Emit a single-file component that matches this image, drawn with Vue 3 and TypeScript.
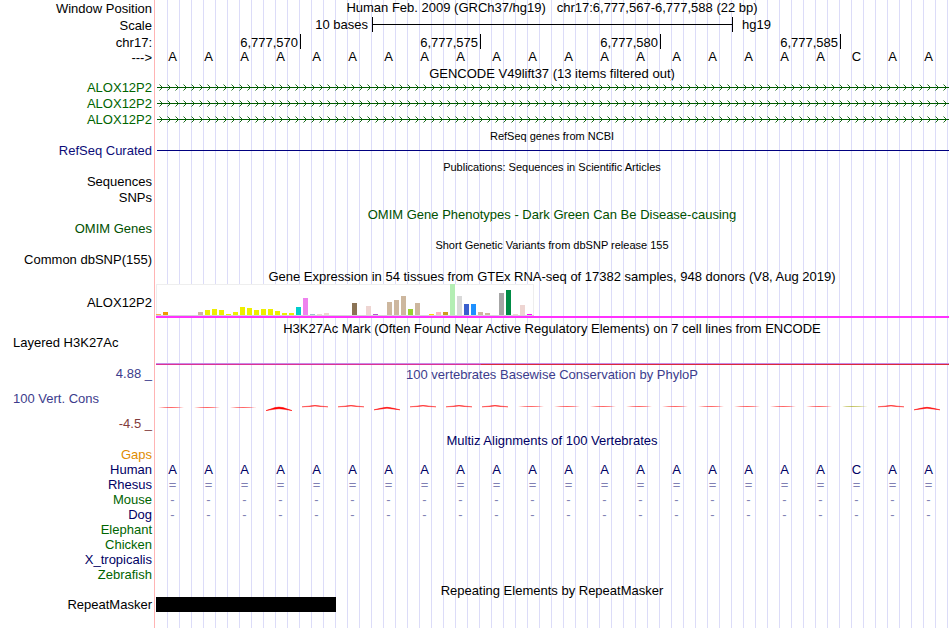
<script setup lang="ts">
type Tone = 'navy' | 'gene'

interface Bar {
  h: number
  c: string
}

interface Species {
  name: string
  tone: Tone
  symbol?: string
}

const bases: string[] = 'AAAAAAAAAAAAAAAAAAACAA'.split('')
const positions: string[] = ['6,777,570', '6,777,575', '6,777,580', '6,777,585']
const transcripts: string[] = ['ALOX12P2', 'ALOX12P2', 'ALOX12P2']

const species: Species[] = [
  { name: 'Rhesus', tone: 'navy', symbol: '=' },
  { name: 'Mouse', tone: 'gene', symbol: '-' },
  { name: 'Dog', tone: 'navy', symbol: '-' },
  { name: 'Elephant', tone: 'gene' },
  { name: 'Chicken', tone: 'gene' },
  { name: 'X_tropicalis', tone: 'navy' },
  { name: 'Zebrafish', tone: 'gene' },
]

const tan = '#cdb79e'
const brain = '#eeee00'
const blush = '#eed5d2'
const none: Bar = { h: 0, c: 'transparent' }
const bar = (h: number, c: string): Bar => ({ h, c })

const expression: Bar[] = [
  bar(1, '#ffaa56'), bar(3, '#ee9a00'), none, none, none, none, bar(3, tan),
  bar(5, brain), bar(6, brain), bar(5, brain), bar(1, brain), bar(3, brain), bar(8, brain),
  bar(7, brain), bar(5, brain), bar(6, brain), bar(6, brain), bar(4, brain), bar(2, brain),
  bar(2, brain), bar(8, '#00cdcd'), bar(17, '#ee82ee'), bar(1, '#9ac0cd'), bar(1, blush),
  bar(2, blush), none, none, none, bar(12, '#8b7355'), none, bar(9, blush), bar(1, '#b452cd'),
  none, bar(13, tan), bar(15, tan), bar(19, tan), bar(6, '#9acd32'), bar(12, tan), none,
  bar(1, '#ffd700'), bar(3, '#ffb6c1'), bar(3, '#cd9b1d'), bar(31, '#b4eeb4'), bar(19, '#d9d9d9'),
  bar(11, '#3a5fcd'), bar(11, '#1e90ff'), bar(3, tan), bar(2, tan), none, bar(22, '#a6a6a6'),
  bar(25, '#008b45'), bar(1, blush), bar(10, blush), bar(1, '#ff00ff'),
]

// Shape of the conservation score under each base
const shapes: string[] = [
  'low', 'low', 'low', 'deep', 'mild', 'mild', 'dip', 'mild', 'mild', 'mild', 'flat',
  'flat', 'flat', 'flat', 'flat', 'flat', 'flat', 'flat', 'flat', 'olive', 'mild', 'dip',
]
const curves: Record<string, string> = {
  low: 'M2 5.5Q15 4.5 28 5.5Q15 6.5 2 5.5Z',
  flat: 'M2 4.5Q15 3.5 28 4.5Q15 5.5 2 4.5Z',
  olive: 'M2 4.5Q9 3.5 28 4.5Q9 5.5 2 4.5Z',
  mild: 'M2 4.8L8 4.2Q15 2.8 22 4.2L28 4.8L22 4.6Q15 3.4 8 4.6Z',
  dip: 'M2 7.8L9 6.2Q15 4.4 21 6.2L28 7.8L21 7Q15 5.4 9 7Z',
  deep: 'M2 8.6L11 5.6Q15 4.6 19 5.6L28 8.6L20 7.2Q15 6.2 10 7.2Z',
}
</script>

<template>
  <main class="browser">
    <div class="row">
      <div class="label tall">Window Position</div>
      <div class="plot center">Human Feb. 2009 (GRCh37/hg19)&nbsp;&nbsp; chr17:6,777,567-6,777,588 (22 bp)</div>
    </div>
    <div class="row">
      <div class="label tall">Scale</div>
      <div class="plot scale">
        <span class="bases">10 bases</span>
        <span class="ruler"><i></i></span>
        <span class="assembly">hg19</span>
      </div>
    </div>
    <div class="row ruler-row">
      <div class="label tall">chr17:</div>
      <div class="plot ticks">
        <span v-for="p in positions" :key="p" class="tick">{{ p }}</span>
      </div>
    </div>
    <div class="row line">
      <div class="label">---&gt;</div>
      <div class="plot letters sequence">
        <span v-for="(b, i) in bases" :key="i">{{ b }}</span>
      </div>
    </div>

    <div class="row line">
      <div class="label"></div>
      <h2 class="plot title">GENCODE V49lift37 (13 items filtered out)</h2>
    </div>
    <div v-for="(t, i) in transcripts" :key="i" class="row item">
      <div class="label gene">{{ t }}</div>
      <div class="plot">
        <svg class="intron" height="16" aria-hidden="true">
          <defs>
            <pattern :id="'strand' + i" x="3" y="0" width="8" height="16" patternUnits="userSpaceOnUse">
              <path d="M0.5 4.5L3.5 7.5L0.5 10.5" fill="none" stroke="#005a00" stroke-width="0.9" />
            </pattern>
          </defs>
          <rect x="3" y="0" width="100%" height="16" :fill="'url(#strand' + i + ')'" />
          <rect x="1" y="7" width="100%" height="1" fill="#005a00" />
        </svg>
      </div>
    </div>

    <div class="row line">
      <div class="label"></div>
      <h2 class="plot title small">RefSeq genes from NCBI</h2>
    </div>
    <div class="row item">
      <div class="label refseq">RefSeq Curated</div>
      <div class="plot"><div class="refseq-line"></div></div>
    </div>

    <div class="row line">
      <div class="label"></div>
      <h2 class="plot title small">Publications: Sequences in Scientific Articles</h2>
    </div>
    <div class="row item">
      <div class="label">Sequences</div>
      <div class="plot"></div>
    </div>
    <div class="row item">
      <div class="label">SNPs</div>
      <div class="plot"></div>
    </div>

    <div class="row line">
      <div class="label"></div>
      <h2 class="plot title green">OMIM Gene Phenotypes - Dark Green Can Be Disease-causing</h2>
    </div>
    <div class="row item">
      <div class="label green">OMIM Genes</div>
      <div class="plot"></div>
    </div>

    <div class="row line">
      <div class="label"></div>
      <h2 class="plot title small">Short Genetic Variants from dbSNP release 155</h2>
    </div>
    <div class="row item">
      <div class="label">Common dbSNP(155)</div>
      <div class="plot"></div>
    </div>

    <div class="row line">
      <div class="label"></div>
      <h2 class="plot title">Gene Expression in 54 tissues from GTEx RNA-seq of 17382 samples, 948 donors (V8, Aug 2019)</h2>
    </div>
    <div class="row gtex">
      <div class="label">ALOX12P2</div>
      <div class="plot">
        <div class="chart">
          <span
            v-for="(b, i) in expression"
            :key="i"
            class="bar"
            :style="{ height: b.h + 'px', background: b.c }"
          ></span>
        </div>
        <div class="gene-model"></div>
      </div>
    </div>

    <div class="row line">
      <div class="label"></div>
      <h2 class="plot title">H3K27Ac Mark (Often Found Near Active Regulatory Elements) on 7 cell lines from ENCODE</h2>
    </div>
    <div class="row histone">
      <div class="label left">Layered H3K27Ac</div>
      <div class="plot"><div class="signal"></div></div>
    </div>

    <div class="row phylop">
      <div class="label axis">
        <span class="upper">4.88 _</span>
        <span class="left upper">100 Vert. Cons</span>
        <span class="lower">-4.5 _</span>
      </div>
      <div class="plot">
        <h2 class="title score">100 vertebrates Basewise Conservation by PhyloP</h2>
        <div class="letters curves">
          <svg v-for="(s, i) in shapes" :key="i" width="30" height="10" viewBox="0 0 30 10" :class="s" aria-hidden="true">
            <path :d="curves[s]" />
          </svg>
        </div>
      </div>
    </div>

    <div class="row line">
      <div class="label"></div>
      <h2 class="plot title navy">Multiz Alignments of 100 Vertebrates</h2>
    </div>
    <div class="row line">
      <div class="label orange">Gaps</div>
      <div class="plot"></div>
    </div>
    <div class="row line">
      <div class="label navy">Human</div>
      <div class="plot letters navy">
        <span v-for="(b, i) in bases" :key="i">{{ b }}</span>
      </div>
    </div>
    <div v-for="s in species" :key="s.name" class="row line">
      <div class="label" :class="s.tone">{{ s.name }}</div>
      <div class="plot letters match">
        <template v-if="s.symbol">
          <span v-for="(b, i) in bases" :key="i">{{ s.symbol }}</span>
        </template>
      </div>
    </div>

    <div class="row line">
      <div class="label"></div>
      <h2 class="plot title">Repeating Elements by RepeatMasker</h2>
    </div>
    <div class="row line">
      <div class="label">RepeatMasker</div>
      <div class="plot"><div class="repeat"></div></div>
    </div>
    <div class="row rest">
      <div class="label"></div>
      <div class="plot"></div>
    </div>
  </main>
</template>

<style>
body {
  background: #fff;
}
</style>

<style scoped>
.browser {
  display: flex;
  flex-direction: column;
  min-height: 100vh;
  overflow: hidden;
  font: 13px/15px "Liberation Sans", Arial, Helvetica, sans-serif;
  color: #000;
  white-space: nowrap;
}
.row {
  display: grid;
  grid-template-columns: 155px 1fr;
  column-gap: 1px;
  padding-right: 2px;
  height: 17px;
}
.ruler-row,
.item {
  height: 16px;
}
.line {
  height: 15px;
}
.label {
  box-sizing: border-box;
  min-width: 0;
  padding-right: 2px;
  border-right: 1px solid #ffb4b4;
  text-align: right;
}
.tall {
  line-height: 17px;
}
.plot {
  min-width: 0;
  background-image: linear-gradient(to right, transparent calc(100% - 1px), #dcdcf8 0);
  background-size: calc(100% / 66) 100%;
}
.center {
  text-align: center;
}
.title {
  margin: 0;
  font-size: 13px;
  font-weight: normal;
  line-height: 17px;
  text-align: center;
}
.small {
  font-size: 11px;
  line-height: 16px;
}
.green {
  color: #005000;
}
.gene {
  color: #006400;
}
.refseq {
  color: #0c0c78;
}
.navy {
  color: #000064;
}
.orange {
  color: #e08c00;
}

/* Scale and coordinates */
.scale {
  display: grid;
  grid-template-columns: 6fr 10fr 6fr;
}
.bases {
  padding-right: 4px;
  text-align: right;
}
.ruler {
  display: flex;
  align-items: center;
  height: 15px;
  margin-right: -1px;
  border: solid #000;
  border-width: 0 1px;
}
.ruler i {
  flex: 1;
  height: 1px;
  background: #000;
}
.assembly {
  padding-left: 10px;
}
.ticks {
  display: grid;
  grid-template-columns: 4fr 5fr 5fr 5fr 3fr;
}
.tick {
  height: 15px;
  margin-right: -1px;
  padding-right: 2px;
  border-right: 1px solid #000;
  line-height: 17px;
  text-align: right;
}
.letters {
  display: grid;
  grid-template-columns: repeat(22, 1fr);
  text-align: center;
}
.letters span {
  padding-right: 3px;
}
.sequence {
  line-height: 13px;
}
.match {
  color: #8080b4;
}

/* Gene tracks */
.intron {
  display: block;
  width: calc(100% + 1px);
}
.refseq-line {
  height: 1px;
  margin: 7px -1px 0 1px;
  background: #000080;
}

/* Expression chart */
.gtex {
  height: 37px;
}
.gtex .label {
  padding-top: 12px;
}
.gtex .plot {
  padding-top: 1px;
}
.chart {
  display: flex;
  align-items: flex-end;
  box-sizing: border-box;
  width: 378px;
  height: 32px;
  gap: 2px;
  border-bottom: 1px solid #d4d4d4;
  background: #fff;
  box-shadow: inset 1px 1px #eee, inset -1px 0 #eee;
}
.bar {
  flex: none;
  width: 5px;
}
.gene-model {
  height: 2px;
  margin-right: -1px;
  background: #ff32ff;
}

/* Histone mark */
.label.left,
.axis .left {
  padding-left: 13px;
  text-align: left;
}
.histone {
  height: 31px;
}
.signal {
  height: 1px;
  margin: 28px -1px 0 0;
  border-top: 1px solid #c88ce6;
  background: linear-gradient(to right, #dc3296 0 41%, #dc283c 41%);
}

/* Conservation */
.phylop {
  height: 66px;
}
.axis {
  display: grid;
  grid-template-rows: 25px 25px 16px;
}
.upper,
.score {
  color: #3c3c8c;
}
.lower {
  color: #823c3c;
}
.curves {
  margin-top: 19px;
}
.curves path {
  fill: #ff0000;
}
.curves .low,
.curves .flat,
.curves .olive {
  opacity: 0.6;
}
.curves .olive path {
  fill: #a0a000;
}
.curves .mild path {
  stroke: #ff0000;
  stroke-width: 0.4;
}
.curves .dip path,
.curves .deep path {
  stroke: #ff0000;
  stroke-width: 0.5;
}

.repeat {
  width: calc(100% * 5 / 22);
  height: 15px;
  background: #000;
}
.rest {
  flex: 1;
  height: auto;
}
</style>
